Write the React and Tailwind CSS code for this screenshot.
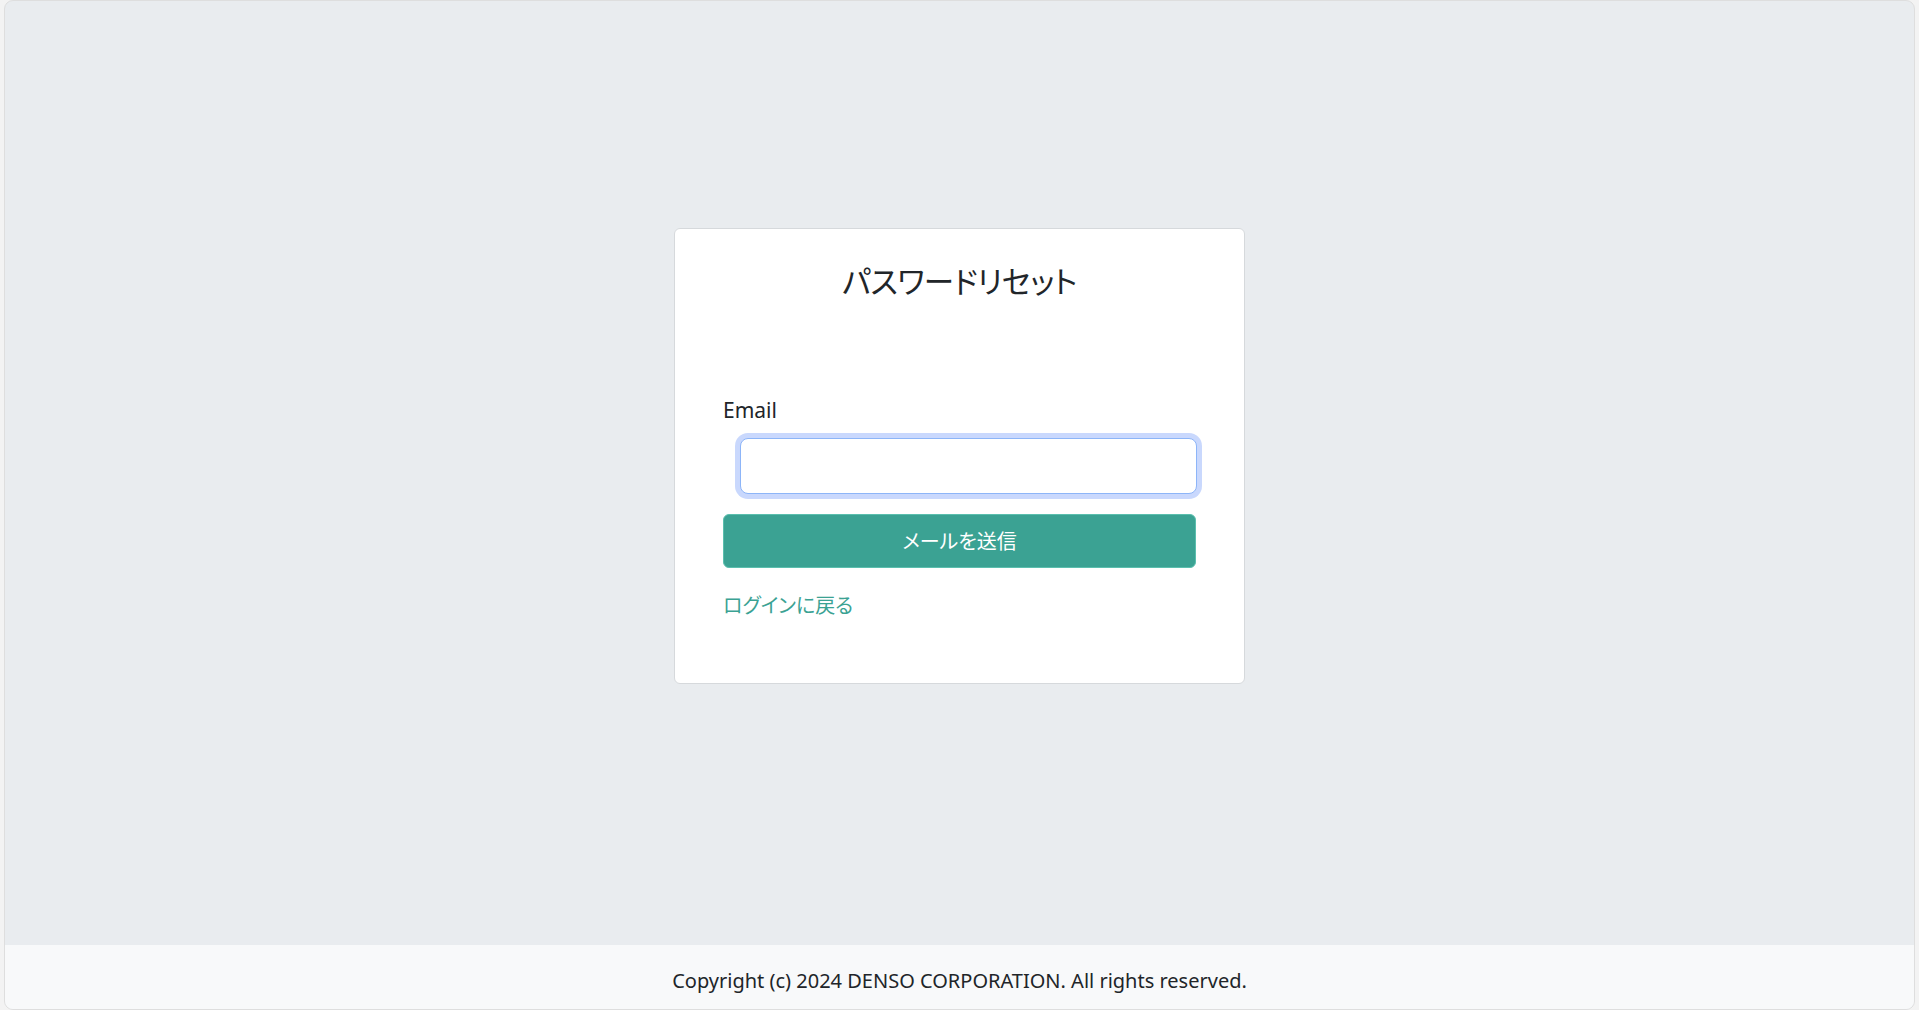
export default function App() {
  const jp = { fontFamily: '"Noto Sans","Noto Sans CJK JP",sans-serif' };
  return (
    <div className="h-[1010px] w-full bg-[#f3f3f3] px-[4px] flex" style={jp}>
      <div className="flex-1 flex flex-col rounded-[9px] border border-[#dedede] bg-[#e9ecef] overflow-hidden">
        <main className="flex-1 flex items-center justify-center pb-[34px]">
          <div className="w-[571px] bg-white border border-[#d6d9dc] rounded-[6px] px-12 pt-[31px] pb-[62px] text-[#212529]">
            <h1 className="text-center text-[30.5px] leading-[42px] font-normal [font-feature-settings:'palt'] tracking-[-0.5px]">パスワードリセット</h1>
            <label className="block mt-[93px] text-[21px] leading-[30px]">Email</label>
            <div className="mt-[13px] pl-[17px]">
              <input
                type="email"
                className="block w-[457px] h-[56px] rounded-[8px] border border-[#8db5f8] ring-[5px] ring-[#c9d8fd] outline-none bg-white px-3"
              />
            </div>
            <button className="mt-[20px] w-full h-[54px] rounded-[6px] bg-[#3ba293] border border-[#5bbfae] text-white text-[20px] pt-[2px] [font-feature-settings:'palt']">
              メールを送信
            </button>
            <div className="mt-[23px]">
              <a href="#" className="text-[20px] leading-[30px] text-[#3ba293] [font-feature-settings:'palt']">ログインに戻る</a>
            </div>
          </div>
        </main>
        <footer className="h-[64px] bg-[#f8f9fa] flex items-center justify-center pt-[8px] text-[20px] text-[#212529]">
          Copyright (c) 2024 DENSO CORPORATION. All rights reserved.
        </footer>
      </div>
    </div>
  );
}
